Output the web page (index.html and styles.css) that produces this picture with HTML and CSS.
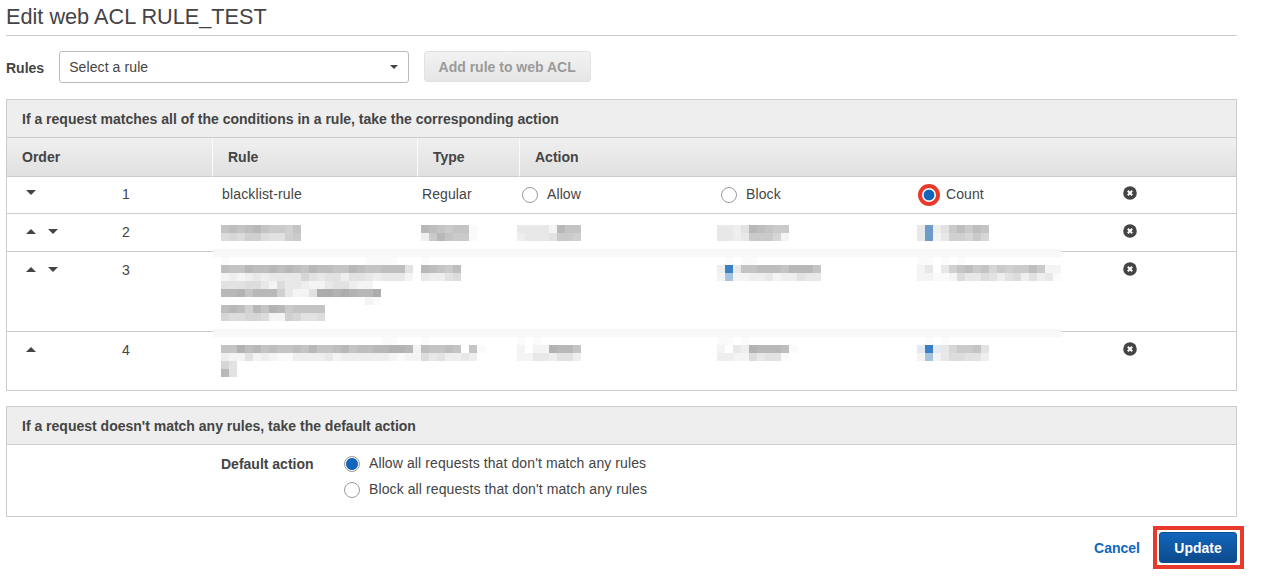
FILE: index.html
```html
<!DOCTYPE html>
<html lang="en">
<head>
<meta charset="utf-8">
<title>Edit web ACL RULE_TEST</title>
<link rel="stylesheet" href="styles.css">
</head>
<body>
<main class="page">
  <h1 class="title">Edit web ACL RULE_TEST</h1>

  <div class="rule-picker">
    <span class="field-label">Rules</span>
    <div class="select"><span>Select a rule</span><i class="caret"></i></div>
    <button class="btn-disabled" type="button">Add rule to web ACL</button>
  </div>

  <section class="panel panel-rules">
    <h2 class="panel-head">If a request matches all of the conditions in a rule, take the corresponding action</h2>
    <table class="rules">
      <colgroup>
        <col class="c-arrows"><col class="c-num"><col class="c-rule"><col class="c-type">
        <col class="c-allow"><col class="c-block"><col class="c-count"><col class="c-del">
      </colgroup>
      <thead>
        <tr>
          <th colspan="2">Order</th>
          <th>Rule</th>
          <th>Type</th>
          <th colspan="4">Action</th>
        </tr>
      </thead>
      <tbody>
        <tr class="r1">
          <td class="arrows"><i class="down"></i></td>
          <td class="num">1</td>
          <td class="rule">blacklist-rule</td>
          <td class="type">Regular</td>
          <td class="act"><label class="opt"><input type="radio" name="a1">Allow</label></td>
          <td class="act"><label class="opt"><input type="radio" name="a1">Block</label></td>
          <td class="act"><label class="opt"><input class="marked" type="radio" name="a1" checked>Count</label></td>
          <td class="del"><svg class="x" viewBox="0 0 14 14"><circle cx="7" cy="7" r="6.8" fill="#444"/><path d="M4.8 4.8l4.4 4.4M9.200 4.800l-4.400 4.400" stroke="#fff" stroke-width="2" fill="none"/></svg></td>
        </tr>
        <tr class="r2">
          <td class="arrows"><i class="up"></i><i class="down"></i></td>
          <td class="num">2</td>
          <td class="rule"><div class="mosaic tight" data-rows="6565467786|a9a88abb87"></div></td>
          <td class="type"><div class="mosaic tight" data-rows="456766f|d74677f"></div></td>
          <td class="act"><div class="mosaic tight left5" data-rows="cccce466|dcccb778"></div></td>
          <td class="act"><div class="mosaic tight left4" data-rows="ccdb45677|ccdc7779e"></div></td>
          <td class="act"><div class="mosaic tight left4" data-rows="cMdb75756|cMec88979"></div></td>
          <td class="del"><svg class="x" viewBox="0 0 14 14"><circle cx="7" cy="7" r="6.8" fill="#444"/><path d="M4.8 4.8l4.4 4.4M9.200 4.800l-4.400 4.400" stroke="#fff" stroke-width="2" fill="none"/></svg></td>
        </tr>
        <tr class="r3">
          <td class="arrows"><i class="up"></i><i class="down"></i></td>
          <td class="num">3</td>
          <td class="rule">
            <div class="mosaic raised" data-rows="f.................ffff.|56645545456455664566555b|ededcdcccc9bcbbdbbcdccce|bbbaaceaccdeecbbdee.|44364448ceeb22323442|..................ef|5458463476666|9aa99aee89bba"></div>
          </td>
          <td class="type"><div class="mosaic raised" data-rows="f....|45675|cddba"></div></td>
          <td class="act"></td>
          <td class="act"><div class="mosaic raised left4" data-rows=".f.ff........|dBc6655564446|eLeeddceddbcc"></div></td>
          <td class="act"><div class="mosaic raised left4" data-rows="ff.f.f............|ec.c865769787757ee|eeffeaccabdbadbdcf"></div></td>
          <td class="del"><svg class="x" viewBox="0 0 14 14"><circle cx="7" cy="7" r="6.8" fill="#444"/><path d="M4.8 4.8l4.4 4.4M9.200 4.800l-4.400 4.400" stroke="#fff" stroke-width="2" fill="none"/></svg></td>
        </tr>
        <tr class="r4">
          <td class="arrows"><i class="up"></i></td>
          <td class="num">4</td>
          <td class="rule">
            <div class="mosaic raised" data-rows="....................ff.|663546566564665465544334e|deebedeffddddceddddddefee|9b.|4b"></div>
          </td>
          <td class="type"><div class="mosaic raised" data-rows="f......|56656 6f|acbddcd"></div></td>
          <td class="act"><div class="mosaic raised left5" data-rows="f.f.....|e.ee3446|eeccdbbd"></div></td>
          <td class="act"><div class="mosaic raised left4" data-rows="ff.f.....|e.cd34445f|ddeeacbbf"></div></td>
          <td class="act"><div class="mosaic raised left4" data-rows=".f.f.....|PBPc9776b|eLecaabbd"></div></td>
          <td class="del"><svg class="x" viewBox="0 0 14 14"><circle cx="7" cy="7" r="6.8" fill="#444"/><path d="M4.8 4.8l4.4 4.4M9.200 4.800l-4.400 4.400" stroke="#fff" stroke-width="2" fill="none"/></svg></td>
        </tr>
      </tbody>
    </table>
    <div class="smear smear-a"></div>
    <div class="smear smear-b"></div>
  </section>

  <section class="panel panel-default">
    <h2 class="panel-head">If a request doesn't match any rules, take the default action</h2>
    <div class="default-body">
      <span class="field-label">Default action</span>
      <div class="default-opts">
        <label class="opt"><input type="radio" name="d" checked>Allow all requests that don't match any rules</label>
        <label class="opt"><input type="radio" name="d">Block all requests that don't match any rules</label>
      </div>
    </div>
  </section>

  <div class="footer">
    <a class="cancel" href="#">Cancel</a>
    <button class="btn-primary" type="button">Update</button>
  </div>
</main>
<script src="mosaic.js"></script>
</body>
</html>
```
FILE: styles.css
```css
* { box-sizing: border-box; }
html, body { margin: 0; padding: 0; background: #fff; }
body {
  font-family: "Liberation Sans", Arial, sans-serif;
  font-size: 14px;
  line-height: 20px;
  color: #444;
}
.page { width: 1237px; min-height: 585px; padding-left: 6px; }

.title {
  margin: 0;
  height: 36px;
  font-size: 21.7px;
  line-height: 34px;
  font-weight: 400;
  color: #444;
  border-bottom: 1px solid #ccc;
}

.rule-picker {
  display: flex;
  align-items: flex-start;
  margin-top: 15px;
  height: 32px;
}
.field-label { font-weight: 700; color: #444; }
.rule-picker .field-label { margin-top: 7px; }
.select {
  display: flex;
  justify-content: space-between;
  align-items: center;
  width: 350px;
  height: 32px;
  margin-left: 15px;
  padding: 0 10px 0 9px;
  border: 1px solid #bbb;
  border-radius: 3px;
  color: #444;
  background: #fff;
  letter-spacing: 0.1px;
}
.caret {
  width: 0; height: 0;
  border-left: 4px solid transparent;
  border-right: 4px solid transparent;
  border-top: 4px solid #444;
}
.btn-disabled {
  width: 167px;
  height: 31px;
  margin-left: 15px;
  padding: 0 1px 0 0;
  font: 700 14px/20px "Liberation Sans", Arial, sans-serif;
  color: #9a9a9a;
  background: linear-gradient(#f2f2f2, #e6e6e6);
  border: 1px solid #e2e2e2;
  border-radius: 3px;
}

.panel {
  position: relative;
  width: 1231px;
  border: 1px solid #ccc;
}
.panel-rules { margin-top: 16px; }
.panel-default { margin-top: 15px; }
.panel-head {
  margin: 0;
  height: 38px;
  padding: 0 15px;
  font-size: 14px;
  font-weight: 700;
  line-height: 38px;
  color: #444;
  background: #eee;
  border-bottom: 1px solid #ccc;
}

.rules {
  width: 1229px;
  table-layout: fixed;
  border-collapse: separate;
  border-spacing: 0;
}
.c-arrows { width: 100px; }
.c-num { width: 105px; }
.c-rule { width: 205px; }
.c-type { width: 102px; }
.c-allow { width: 199px; }
.c-block { width: 200px; }
.c-count { width: 201px; }
.c-del { width: 117px; }

.rules th {
  height: 39px;
  padding: 0 15px;
  text-align: left;
  font-weight: 700;
  color: #444;
  background: linear-gradient(#f0f0f0, #e0e0e0);
  border-bottom: 1px solid #ccc;
  border-left: 1px solid #fafafa;
}
.rules th:first-child { border-left: 0; }
.rules td {
  padding: 8px 0 0;
  vertical-align: top;
  border-bottom: 1px solid #ccc;
}
.r1 { height: 37px; }
.r1 td { padding-top: 7px; }
.r2 { height: 38px; }
.r3 { height: 80px; }
.r4 { height: 58px; }
.r4 td { border-bottom: 0; }

.rules td.arrows { padding-left: 19px; padding-top: 15px; white-space: nowrap; line-height: 0; }
.rules .r1 td.arrows { padding-top: 13px; }
.up, .down {
  display: inline-block;
  vertical-align: top;
  width: 0; height: 0;
  margin-right: 12px;
  border-left: 5.500px solid transparent;
  border-right: 5.500px solid transparent;
}
.up { border-bottom: 5px solid #444; }
.down { border-top: 5px solid #444; }

.rules td.num { padding-left: 15px; }
.rules td.rule { padding-left: 10px; letter-spacing: 0.15px; }
.rules td.type { padding-left: 5px; letter-spacing: 0.1px; }
.rules td.act { padding-left: 3px; }
.rules td.del { padding-left: 4px; padding-top: 10px; }
.rules .r1 td.del { padding-top: 9px; }
.x { display: block; width: 14px; height: 14px; }

.opt { display: flex; align-items: center; color: #444; letter-spacing: 0.1px; }
.opt input {
  appearance: none;
  -webkit-appearance: none;
  flex: none;
  width: 16px;
  height: 16px;
  margin: 2px 9px 0 0;
  border: 1px solid #9a9a9a;
  border-radius: 50%;
  background: #fff;
}
.opt input:checked {
  background: radial-gradient(circle, #1166bb 0 5.500px, #fff 6.500px);
}
.opt input.marked {
  width: 14px;
  height: 14px;
  margin-left: 1px;
  margin-right: 10px;
  border: 0;
  outline: 4px solid #e8392a;
  outline-offset: 0;
  background: radial-gradient(circle, #1166bb 0 5px, #fff 5.800px);
}

.mosaic { margin-left: -1px; width: 0; }
.mosaic.tight { margin-top: 3px; }
.mosaic.raised { margin-top: -3px; }
.mosaic.left5 { margin-left: -5px; }
.mosaic.left4 { margin-left: -4px; }
.m-row { display: flex; height: 8px; }
.m-cell { flex: none; width: 8px; height: 8px; }

.smear {
  position: absolute;
  left: 206px;
  width: 848px;
  height: 8px;
  background: #f8f8f8;
}
.smear-a { top: 149px; }
.smear-b { top: 229px; }

.default-body {
  display: flex;
  height: 71px;
  padding: 8px 0 0 214px;
}
.default-body .field-label { width: 123px; padding-top: 1px; }
.default-opts { display: flex; flex-direction: column; gap: 6px; }

.footer {
  display: flex;
  justify-content: flex-end;
  align-items: center;
  gap: 19px;
  margin-top: 15px;
  height: 31px;
}
.cancel { font-weight: 700; color: #1166bb; text-decoration: none; }
.btn-primary {
  position: relative;
  width: 78px;
  height: 31px;
  padding: 0;
  font: 700 14px/20px "Liberation Sans", Arial, sans-serif;
  color: #fff;
  background: linear-gradient(#1166bb, #0d4a8c);
  border: 1px solid #0d4f92;
  border-radius: 3px;
}
.btn-primary::after {
  content: "";
  position: absolute;
  inset: -7px -8px -7px -7px;
  border: 4px solid #e8392a;
}
```
FILE: mosaic.js
```js
// Renders the redacted (pixelated) table cells from compact row strings.
var SPECIAL = { B: "#3b7fc4", M: "#6f9bcb", L: "#a6c3e0", P: "#e4e9f2" };

function cellColour(ch) {
  if (SPECIAL[ch]) return SPECIAL[ch];
  var v = parseInt(ch, 16);
  if (isNaN(v)) return "transparent";
  var g = 160 + v * 6;
  return "rgb(" + g + "," + g + "," + g + ")";
}

document.querySelectorAll(".mosaic").forEach(function (box) {
  box.getAttribute("data-rows").split("|").forEach(function (line) {
    var row = document.createElement("div");
    row.className = "m-row";
    for (var i = 0; i < line.length; i++) {
      var cell = document.createElement("span");
      cell.className = "m-cell";
      cell.style.background = cellColour(line[i]);
      row.appendChild(cell);
    }
    box.appendChild(row);
  });
});
```
